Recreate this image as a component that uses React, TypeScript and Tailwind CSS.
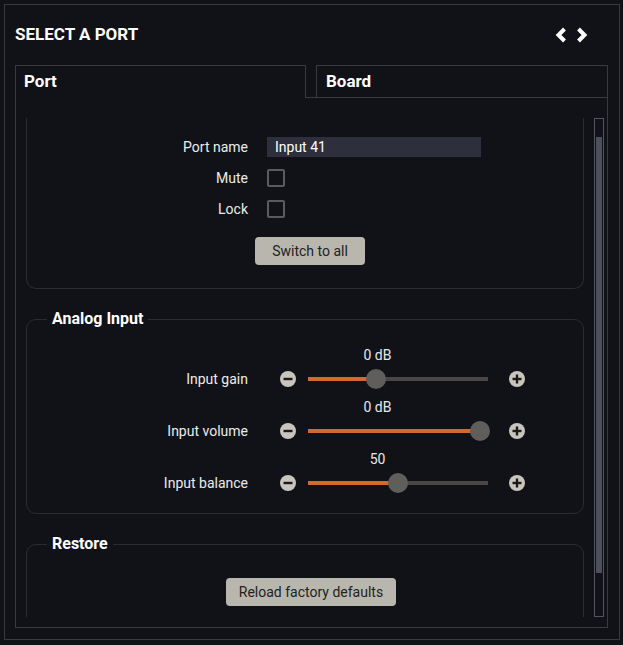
import React from "react";

type SliderRowProps = {
  label: string;
  value: string;
  percent: number;
};

function RoundIcon({ plus }: { plus?: boolean }) {
  return (
    <svg width="16" height="16" viewBox="0 0 16 16" className="shrink-0">
      <circle cx="8" cy="8" r="8" fill="#c9c5bc" />
      <rect x="3.5" y="6.8" width="9" height="2.4" fill="#1a1a1a" />
      {plus && <rect x="6.8" y="3.5" width="2.4" height="9" fill="#1a1a1a" />}
    </svg>
  );
}

function SliderRow({ label, value, percent }: SliderRowProps) {
  return (
    <div className="grid grid-cols-[221px_1fr] gap-x-[19px] gap-y-[6px]">
      <div />
      <div className="w-[221px] text-center text-[14px] leading-[16px] text-[#e8e8e8]">{value}</div>
      <div className="flex h-[20px] items-center justify-end text-[14px] text-[#ececec]">{label}</div>
      <div className="flex h-[20px] items-center">
        <div className="ml-[13px]">
          <RoundIcon />
        </div>
        <div className="relative ml-[12px] h-[4px] w-[180px] bg-[#4a4646]">
          <div className="h-full bg-[#d4692c]" style={{ width: `${percent}%` }} />
          <div
            className="absolute top-1/2 h-[20px] w-[20px] -translate-x-1/2 -translate-y-1/2 rounded-full bg-[#5f5e5c]"
            style={{ left: `${percent}%` }}
          />
        </div>
        <div className="ml-[21px]">
          <RoundIcon plus />
        </div>
      </div>
    </div>
  );
}

function Legend({ children }: { children: React.ReactNode }) {
  return (
    <legend className="ml-[20px] px-[5px] text-[16px] font-bold leading-[20px] text-white">
      {children}
    </legend>
  );
}

export default function App() {
  return (
    <div
      className="h-[645px] w-[623px] bg-[#111217] p-[4px] text-white"
      style={{ fontFamily: "Roboto, 'Liberation Sans', sans-serif" }}
    >
      <div className="flex h-[636px] w-[616px] flex-col border border-[#3a3a3e] px-[10px]">
        {/* header */}
        <div className="flex h-[60px] shrink-0 items-center justify-between">
          <h1 className="text-[17px] font-bold text-white">SELECT A PORT</h1>
          <div className="mr-[21px] flex items-center gap-[9px]">
            <svg width="12" height="16" viewBox="0 0 12 16">
              <polyline points="9.5,2 3.5,8 9.5,14" fill="none" stroke="#fff" strokeWidth="4" />
            </svg>
            <svg width="12" height="16" viewBox="0 0 12 16">
              <polyline points="2.5,2 8.5,8 2.5,14" fill="none" stroke="#fff" strokeWidth="4" />
            </svg>
          </div>
        </div>

        {/* tabs */}
        <div className="flex w-[593px] shrink-0">
          <div className="h-[33px] w-[291px] border-x border-t border-[#3a3a3e] px-[8px] pt-[3px] text-[17px] font-bold">
            Port
          </div>
          <div className="flex-1 border-b border-[#3a3a3e] pl-[10px]">
            <div className="h-[32px] border-x border-t border-[#3a3a3e] px-[9px] pt-[3px] text-[17px] font-bold">
              Board
            </div>
          </div>
        </div>

        {/* panel */}
        <div className="flex h-[530px] w-[593px] gap-[10px] border-x border-b border-[#3a3a3e] pb-[10px] pl-[10px] pr-[3px] pt-[20px]">
          <div className="w-[558px] overflow-hidden">
            <div className="rounded-b-[10px] border-x border-b border-[#2b2c31] pb-[23px] pt-[19px]">
              <div className="grid grid-cols-[221px_1fr] items-center gap-x-[19px] gap-y-[11px] text-[14px] leading-[20px] text-[#ececec]">
                <div className="text-right">Port name</div>
                <div className="flex h-[20px] w-[214px] items-center bg-[#2e2f3c] px-[8px] text-[14px] text-white">
                  Input 41
                </div>
                <div className="text-right">Mute</div>
                <div className="h-[18px] w-[18px] rounded-[2px] border-2 border-[#5a5a5f]" />
                <div className="text-right">Lock</div>
                <div className="h-[18px] w-[18px] rounded-[2px] border-2 border-[#5a5a5f]" />
              </div>
              <div className="mt-[18px] flex justify-center pl-[10px]">
                <button className="h-[28px] w-[110px] rounded-[4px] bg-[#b9b7ad] text-[14px] text-[#222]">
                  Switch to all
                </button>
              </div>
            </div>

            <fieldset className="mt-[20px] rounded-[10px] border border-[#2b2c31] pb-[20px] pt-[18px]">
              <Legend>Analog Input</Legend>
              <div className="flex flex-col gap-[10px]">
                <SliderRow label="Input gain" value="0 dB" percent={37.8} />
                <SliderRow label="Input volume" value="0 dB" percent={95.5} />
                <SliderRow label="Input balance" value="50" percent={50} />
              </div>
            </fieldset>

            <fieldset className="mt-[20px] h-[120px] rounded-[10px] border border-[#2b2c31] pt-[24px]">
              <Legend>Restore</Legend>
              <div className="flex justify-center pl-[12px]">
                <button className="h-[28px] w-[170px] rounded-[4px] bg-[#b9b7ad] text-[14px] text-[#222]">
                  Reload factory defaults
                </button>
              </div>
            </fieldset>
          </div>

          {/* scrollbar */}
          <div className="h-[499px] w-[10px] shrink-0 border border-[#55555f] px-[1px] pt-[18px]">
            <div className="h-[436px] w-full bg-[#4e4f5c]" />
          </div>
        </div>
      </div>
    </div>
  );
}
